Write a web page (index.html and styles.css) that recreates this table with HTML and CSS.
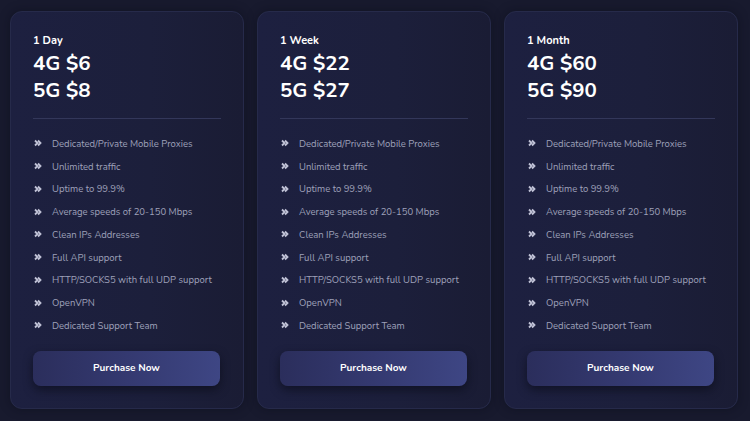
FILE: index.html
```html
<!DOCTYPE html>
<html>
<head>
<meta charset="utf-8">
<link rel="stylesheet" href="styles.css">
</head>
<body>
<div class="plans">
  <div class="card">
    <div class="period">1 Day</div>
    <div class="price">4G $6</div>
    <div class="price">5G $8</div>
    <hr class="divider">
    <ul class="features">
      <li><svg class="chev" viewBox="0 0 8 8"><path d="M1 1.5 3.5 4 1 6.5M4 1.5 6.5 4 4 6.5"/></svg>Dedicated/Private Mobile Proxies</li>
      <li><svg class="chev" viewBox="0 0 8 8"><path d="M1 1.5 3.5 4 1 6.5M4 1.5 6.5 4 4 6.5"/></svg>Unlimited traffic</li>
      <li><svg class="chev" viewBox="0 0 8 8"><path d="M1 1.5 3.5 4 1 6.5M4 1.5 6.5 4 4 6.5"/></svg>Uptime to 99.9%</li>
      <li><svg class="chev" viewBox="0 0 8 8"><path d="M1 1.5 3.5 4 1 6.5M4 1.5 6.5 4 4 6.5"/></svg>Average speeds of 20-150 Mbps</li>
      <li><svg class="chev" viewBox="0 0 8 8"><path d="M1 1.5 3.5 4 1 6.5M4 1.5 6.5 4 4 6.5"/></svg>Clean IPs Addresses</li>
      <li><svg class="chev" viewBox="0 0 8 8"><path d="M1 1.5 3.5 4 1 6.5M4 1.5 6.5 4 4 6.5"/></svg>Full API support</li>
      <li><svg class="chev" viewBox="0 0 8 8"><path d="M1 1.5 3.5 4 1 6.5M4 1.5 6.5 4 4 6.5"/></svg>HTTP/SOCKS5 with full UDP support</li>
      <li><svg class="chev" viewBox="0 0 8 8"><path d="M1 1.5 3.5 4 1 6.5M4 1.5 6.5 4 4 6.5"/></svg>OpenVPN</li>
      <li><svg class="chev" viewBox="0 0 8 8"><path d="M1 1.5 3.5 4 1 6.5M4 1.5 6.5 4 4 6.5"/></svg>Dedicated Support Team</li>
    </ul>
    <button class="buy">Purchase Now</button>
  </div>
  <div class="card">
    <div class="period">1 Week</div>
    <div class="price">4G $22</div>
    <div class="price">5G $27</div>
    <hr class="divider">
    <ul class="features">
      <li><svg class="chev" viewBox="0 0 8 8"><path d="M1 1.5 3.5 4 1 6.5M4 1.5 6.5 4 4 6.5"/></svg>Dedicated/Private Mobile Proxies</li>
      <li><svg class="chev" viewBox="0 0 8 8"><path d="M1 1.5 3.5 4 1 6.5M4 1.5 6.5 4 4 6.5"/></svg>Unlimited traffic</li>
      <li><svg class="chev" viewBox="0 0 8 8"><path d="M1 1.5 3.5 4 1 6.5M4 1.5 6.5 4 4 6.5"/></svg>Uptime to 99.9%</li>
      <li><svg class="chev" viewBox="0 0 8 8"><path d="M1 1.5 3.5 4 1 6.5M4 1.5 6.5 4 4 6.5"/></svg>Average speeds of 20-150 Mbps</li>
      <li><svg class="chev" viewBox="0 0 8 8"><path d="M1 1.5 3.5 4 1 6.5M4 1.5 6.5 4 4 6.5"/></svg>Clean IPs Addresses</li>
      <li><svg class="chev" viewBox="0 0 8 8"><path d="M1 1.5 3.5 4 1 6.5M4 1.5 6.5 4 4 6.5"/></svg>Full API support</li>
      <li><svg class="chev" viewBox="0 0 8 8"><path d="M1 1.5 3.5 4 1 6.5M4 1.5 6.5 4 4 6.5"/></svg>HTTP/SOCKS5 with full UDP support</li>
      <li><svg class="chev" viewBox="0 0 8 8"><path d="M1 1.5 3.5 4 1 6.5M4 1.5 6.5 4 4 6.5"/></svg>OpenVPN</li>
      <li><svg class="chev" viewBox="0 0 8 8"><path d="M1 1.5 3.5 4 1 6.5M4 1.5 6.5 4 4 6.5"/></svg>Dedicated Support Team</li>
    </ul>
    <button class="buy">Purchase Now</button>
  </div>
  <div class="card">
    <div class="period">1 Month</div>
    <div class="price">4G $60</div>
    <div class="price">5G $90</div>
    <hr class="divider">
    <ul class="features">
      <li><svg class="chev" viewBox="0 0 8 8"><path d="M1 1.5 3.5 4 1 6.5M4 1.5 6.5 4 4 6.5"/></svg>Dedicated/Private Mobile Proxies</li>
      <li><svg class="chev" viewBox="0 0 8 8"><path d="M1 1.5 3.5 4 1 6.5M4 1.5 6.5 4 4 6.5"/></svg>Unlimited traffic</li>
      <li><svg class="chev" viewBox="0 0 8 8"><path d="M1 1.5 3.5 4 1 6.5M4 1.5 6.5 4 4 6.5"/></svg>Uptime to 99.9%</li>
      <li><svg class="chev" viewBox="0 0 8 8"><path d="M1 1.5 3.5 4 1 6.5M4 1.5 6.5 4 4 6.5"/></svg>Average speeds of 20-150 Mbps</li>
      <li><svg class="chev" viewBox="0 0 8 8"><path d="M1 1.5 3.5 4 1 6.5M4 1.5 6.5 4 4 6.5"/></svg>Clean IPs Addresses</li>
      <li><svg class="chev" viewBox="0 0 8 8"><path d="M1 1.5 3.5 4 1 6.5M4 1.5 6.5 4 4 6.5"/></svg>Full API support</li>
      <li><svg class="chev" viewBox="0 0 8 8"><path d="M1 1.5 3.5 4 1 6.5M4 1.5 6.5 4 4 6.5"/></svg>HTTP/SOCKS5 with full UDP support</li>
      <li><svg class="chev" viewBox="0 0 8 8"><path d="M1 1.5 3.5 4 1 6.5M4 1.5 6.5 4 4 6.5"/></svg>OpenVPN</li>
      <li><svg class="chev" viewBox="0 0 8 8"><path d="M1 1.5 3.5 4 1 6.5M4 1.5 6.5 4 4 6.5"/></svg>Dedicated Support Team</li>
    </ul>
    <button class="buy">Purchase Now</button>
  </div>
</div>
</body>
</html>
```

FILE: styles.css
```css
html, body {
  margin: 0;
  padding: 0;
  background: #181a2e;
  width: 750px;
  height: 421px;
  overflow: hidden;
  font-family: "Nunito", "Lato", "Noto Sans", sans-serif;
}
.plans {
  display: flex;
  gap: 13px;
  padding: 11px 0 0 10px;
}
.card {
  width: 234px;
  height: 398px;
  box-sizing: border-box;
  border: 1px solid #262a4a;
  border-radius: 12px;
  background: linear-gradient(90deg, #1d2040 0%, #1c1f3b 60%, #1a1c34 100%);
  padding: 22px 22px 0 22px;
  box-shadow: 0 0 10px rgba(10, 12, 25, 0.5);
}
.period {
  color: #ffffff;
  font-weight: 700;
  font-size: 11px;
  line-height: 14px;
  margin-bottom: 2px;
}
.price {
  color: #ffffff;
  font-weight: 700;
  font-size: 20.5px;
  line-height: 27px;
}
.divider {
  border: none;
  height: 1px;
  background: #33375a;
  margin: 14px 0 13px 0;
}
.features {
  list-style: none;
  margin: 0;
  padding: 0;
}
.features li {
  display: flex;
  align-items: center;
  height: 22.75px;
  color: #9fa1ba;
  font-size: 9.5px;
}
.chev {
  width: 8px;
  height: 8px;
  margin: 0 10px 0 1px;
  fill: none;
  stroke: #c0c2d6;
  stroke-width: 1.8;
}
.buy {
  display: block;
  width: 187px;
  height: 35px;
  margin: 14px 0 0 0;
  border: none;
  border-radius: 8px;
  background: linear-gradient(90deg, #2b2e5c 0%, #343970 50%, #3e4684 100%);
  color: #ffffff;
  font-family: inherit;
  font-weight: 700;
  font-size: 10px;
  box-shadow: 0 4px 10px rgba(8, 10, 22, 0.6);
}
```
